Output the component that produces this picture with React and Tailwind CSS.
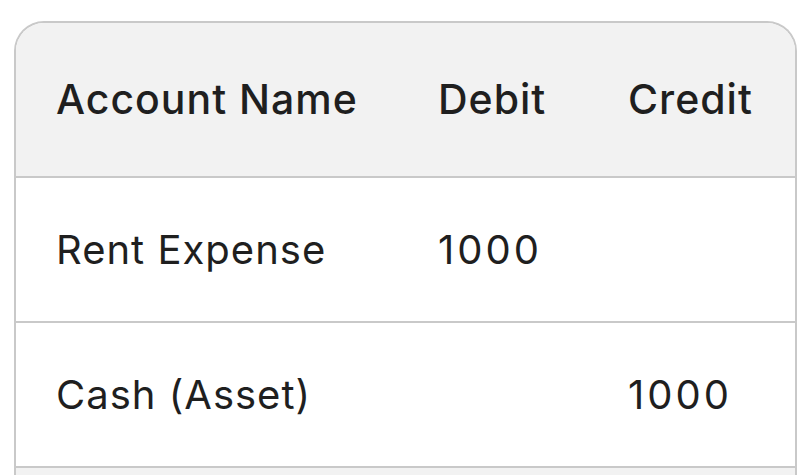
import React from 'react';

const rows = [
  { name: 'Rent Expense', debit: '1000', credit: '' },
  { name: 'Cash (Asset)', debit: '', credit: '1000' },
];

const App = () => {
  return (
    <div className="h-screen overflow-hidden bg-white pl-[14px] pr-[12px] pt-[21px] font-['Inter',sans-serif] text-[#1f1f1f]">
      <div className="overflow-hidden rounded-t-[30px] border-2 border-b-0 border-[#c9c9c9]">
        <div className="grid h-[155px] grid-cols-[382px_190px_1fr] items-center border-b-2 border-[#c9c9c9] bg-[#f2f2f2] text-[41px] font-medium tracking-[1px]">
          <div className="pl-[40px]">Account Name</div>
          <div className="pl-[40px]">Debit</div>
          <div className="pl-[40px]">Credit</div>
        </div>
        {rows.map((row) => (
          <div
            key={row.name}
            className="grid h-[145px] grid-cols-[382px_190px_1fr] items-center border-b-2 border-[#c9c9c9] text-[40px] tracking-[1px]"
          >
            <div className="pl-[40px]">{row.name}</div>
            <div className="pl-[40px] tracking-[3px]">{row.debit}</div>
            <div className="pl-[40px] tracking-[3px]">{row.credit}</div>
          </div>
        ))}
        <div className="h-[145px] bg-[#f2f2f2]"></div>
      </div>
    </div>
  );
};

export default App;
